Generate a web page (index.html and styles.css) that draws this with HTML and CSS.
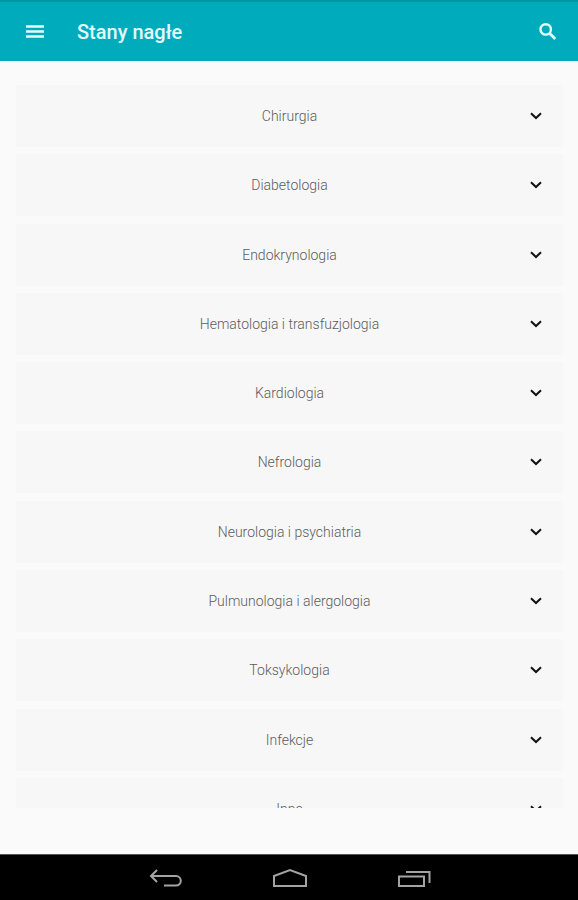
FILE: index.html
```html
<!DOCTYPE html>
<html lang="pl">
<head>
    <meta charset="UTF-8" />
    <meta name="viewport" content="width=device-width, initial-scale=1" />
    <title>Stany nagłe</title>
    <link rel="stylesheet" href="styles.css">
</head>
<body>
<svg class="sprite" aria-hidden="true">
    <symbol id="chevron" viewBox="0 0 12 8">
        <path d="M1 1.2 L6 6 L11 1.2" fill="none" stroke="currentColor" stroke-width="2" />
    </symbol>
</svg>

<header class="app-bar">
    <button class="icon-button" type="button" aria-label="Menu">
        <svg width="18" height="14" viewBox="0 0 18 14">
            <path d="M0 1.5h18M0 6.5h18M0 11.5h18" stroke="currentColor" stroke-width="2.4" />
        </svg>
    </button>
    <h1>Stany nagłe</h1>
    <button class="icon-button" type="button" aria-label="Szukaj">
        <svg width="18" height="18" viewBox="0 0 18 18" fill="none" stroke="currentColor">
            <circle cx="6.7" cy="6.4" r="5.2" stroke-width="2.4" />
            <path d="M10.6 10.3 L16.2 15.9" stroke-width="2.8" />
        </svg>
    </button>
</header>

<main class="content">
    <ul class="categories">
        <li><button class="category" type="button"><span>Chirurgia</span><svg class="chevron"><use href="#chevron" /></svg></button></li>
        <li><button class="category" type="button"><span>Diabetologia</span><svg class="chevron"><use href="#chevron" /></svg></button></li>
        <li><button class="category" type="button"><span>Endokrynologia</span><svg class="chevron"><use href="#chevron" /></svg></button></li>
        <li><button class="category" type="button"><span>Hematologia i transfuzjologia</span><svg class="chevron"><use href="#chevron" /></svg></button></li>
        <li><button class="category" type="button"><span>Kardiologia</span><svg class="chevron"><use href="#chevron" /></svg></button></li>
        <li><button class="category" type="button"><span>Nefrologia</span><svg class="chevron"><use href="#chevron" /></svg></button></li>
        <li><button class="category" type="button"><span>Neurologia i psychiatria</span><svg class="chevron"><use href="#chevron" /></svg></button></li>
        <li><button class="category" type="button"><span>Pulmunologia i alergologia</span><svg class="chevron"><use href="#chevron" /></svg></button></li>
        <li><button class="category" type="button"><span>Toksykologia</span><svg class="chevron"><use href="#chevron" /></svg></button></li>
        <li><button class="category" type="button"><span>Infekcje</span><svg class="chevron"><use href="#chevron" /></svg></button></li>
        <li><button class="category" type="button"><span>Inne</span><svg class="chevron"><use href="#chevron" /></svg></button></li>
    </ul>
</main>

<nav class="system-bar">
    <button type="button" aria-label="Wstecz">
        <svg width="34" height="20" viewBox="0 0 34 20">
            <path d="M8 2 L2 8 L8 14 M2 8 H27 A4.8 4.8 0 0 1 27 17.6 H15" />
        </svg>
    </button>
    <button type="button" aria-label="Ekran główny">
        <svg width="36" height="20" viewBox="0 0 36 20">
            <path d="M2 18 V8 L18 2 L34 8 V18 Z" />
        </svg>
    </button>
    <button type="button" aria-label="Ostatnie aplikacje">
        <svg width="34" height="20" viewBox="0 0 34 20">
            <path d="M2 8.5 H27 V18 H2 Z M9 4 H32.5 V15" />
        </svg>
    </button>
</nav>
</body>
</html>
```

FILE: styles.css
```css
* { box-sizing: border-box; }
body {
    font-family: Roboto, sans-serif;
    background: #fafafa;
    margin: 0;
    height: 100vh;
    display: flex;
    flex-direction: column;
    color: #5c5c5c;
}
button {
    font: inherit;
    color: inherit;
    background: none;
    border: 0;
    padding: 0;
    cursor: pointer;
}
svg { display: block; }
.sprite {
    position: absolute;
    width: 0;
    height: 0;
}
.app-bar {
    flex: none;
    height: 61px;
    padding: 0 18px 0 23px;
    border-top: 2px solid #0097a5;
    background: #00acbc;
    color: #e4fafc;
    display: flex;
    align-items: center;
}
.app-bar h1 {
    flex: 1;
    margin: 0 0 0 30px;
    font-size: 20px;
    line-height: 24px;
    font-weight: 500;
}
.icon-button {
    width: 24px;
    height: 24px;
    display: flex;
    align-items: center;
    justify-content: center;
}
.content {
    flex: 1;
    min-height: 0;
    margin: 24px 15px 46px 16px;
    overflow: hidden;
}
.categories {
    list-style: none;
    margin: 0;
    padding: 0;
    min-height: 755px;
    display: flex;
    flex-direction: column;
    justify-content: space-between;
}
.category {
    width: 100%;
    height: 62px;
    padding: 0 21px;
    background: #f7f7f7;
    font-size: 14px;
    font-weight: 300;
    line-height: 20px;
    display: grid;
    grid-template-columns: 12px 1fr 12px;
    align-items: center;
}
.category span { grid-column: 2; }
.chevron {
    width: 12px;
    height: 8px;
    color: #111;
}
.system-bar {
    flex: none;
    height: 46px;
    border-top: 1px solid #555;
    background: #000;
    padding-left: 2px;
    display: flex;
    align-items: center;
    justify-content: center;
    gap: 89px;
}
.system-bar path {
    fill: none;
    stroke: #a3a3a3;
    stroke-width: 2;
}
```
